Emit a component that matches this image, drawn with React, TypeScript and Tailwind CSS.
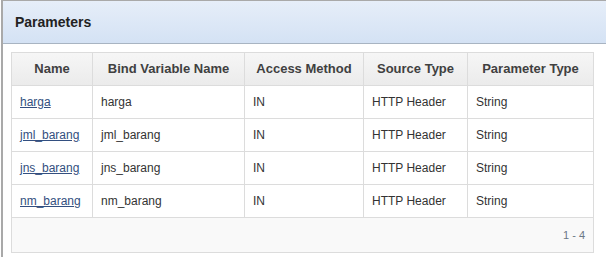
import React from 'react';

const rows = [
  { name: 'harga', bind: 'harga' },
  { name: 'jml_barang', bind: 'jml_barang' },
  { name: 'jns_barang', bind: 'jns_barang' },
  { name: 'nm_barang', bind: 'nm_barang' },
];

const columns = [
  { label: 'Name', width: 'w-[81px]' },
  { label: 'Bind Variable Name', width: 'w-[152px]' },
  { label: 'Access Method', width: 'w-[119px]' },
  { label: 'Source Type', width: 'w-[104px]' },
  { label: 'Parameter Type', width: 'w-[126px]' },
];

export default function App() {
  return (
    <div className="w-[608px] h-[257px] bg-white font-['Liberation_Sans',Arial,sans-serif] overflow-hidden">
      <div className="ml-px w-[605px] h-[257px] border-l-2 border-t border-[#a9a9a9] flex flex-col">
        {/* Region header */}
        <div className="h-[43px] shrink-0 flex items-center px-[12px] bg-gradient-to-b from-[#e6eef9] to-[#d4e2f4] border-b border-[#a8b4c2]">
          <h2 className="text-[14px] font-bold text-[#222]">Parameters</h2>
        </div>

        {/* Report */}
        <div className="pl-[8px] pt-[8px]">
          <table className="border-collapse table-fixed w-[582px] text-[12px]">
            <thead>
              <tr className="h-[33px] bg-gradient-to-b from-[#f6f6f6] to-[#ebebeb]">
                {columns.map((c) => (
                  <th
                    key={c.label}
                    className={`${c.width} border border-[#dcdcdc] text-center font-bold text-[13px] text-[#404040] px-2`}
                  >
                    {c.label}
                  </th>
                ))}
              </tr>
            </thead>
            <tbody>
              {rows.map((r) => (
                <tr key={r.name} className="h-[33px] bg-white">
                  <td className="border border-[#dcdcdc] pl-[8px] pr-2 text-left">
                    <a href="#" className="text-[#334f80] underline">{r.name}</a>
                  </td>
                  <td className="border border-[#dcdcdc] px-[8px] text-[#333]">{r.bind}</td>
                  <td className="border border-[#dcdcdc] px-[8px] text-[#333]">IN</td>
                  <td className="border border-[#dcdcdc] px-[8px] text-[#333]">HTTP Header</td>
                  <td className="border border-[#dcdcdc] px-[8px] text-[#333]">String</td>
                </tr>
              ))}
              <tr className="h-[35px] bg-[#f9f9f9]">
                <td colSpan={5} className="border border-[#dcdcdc] text-right pr-[8px] text-[11px] text-[#6b7785]">
                  1 - 4
                </td>
              </tr>
            </tbody>
          </table>
        </div>
      </div>
    </div>
  );
}
